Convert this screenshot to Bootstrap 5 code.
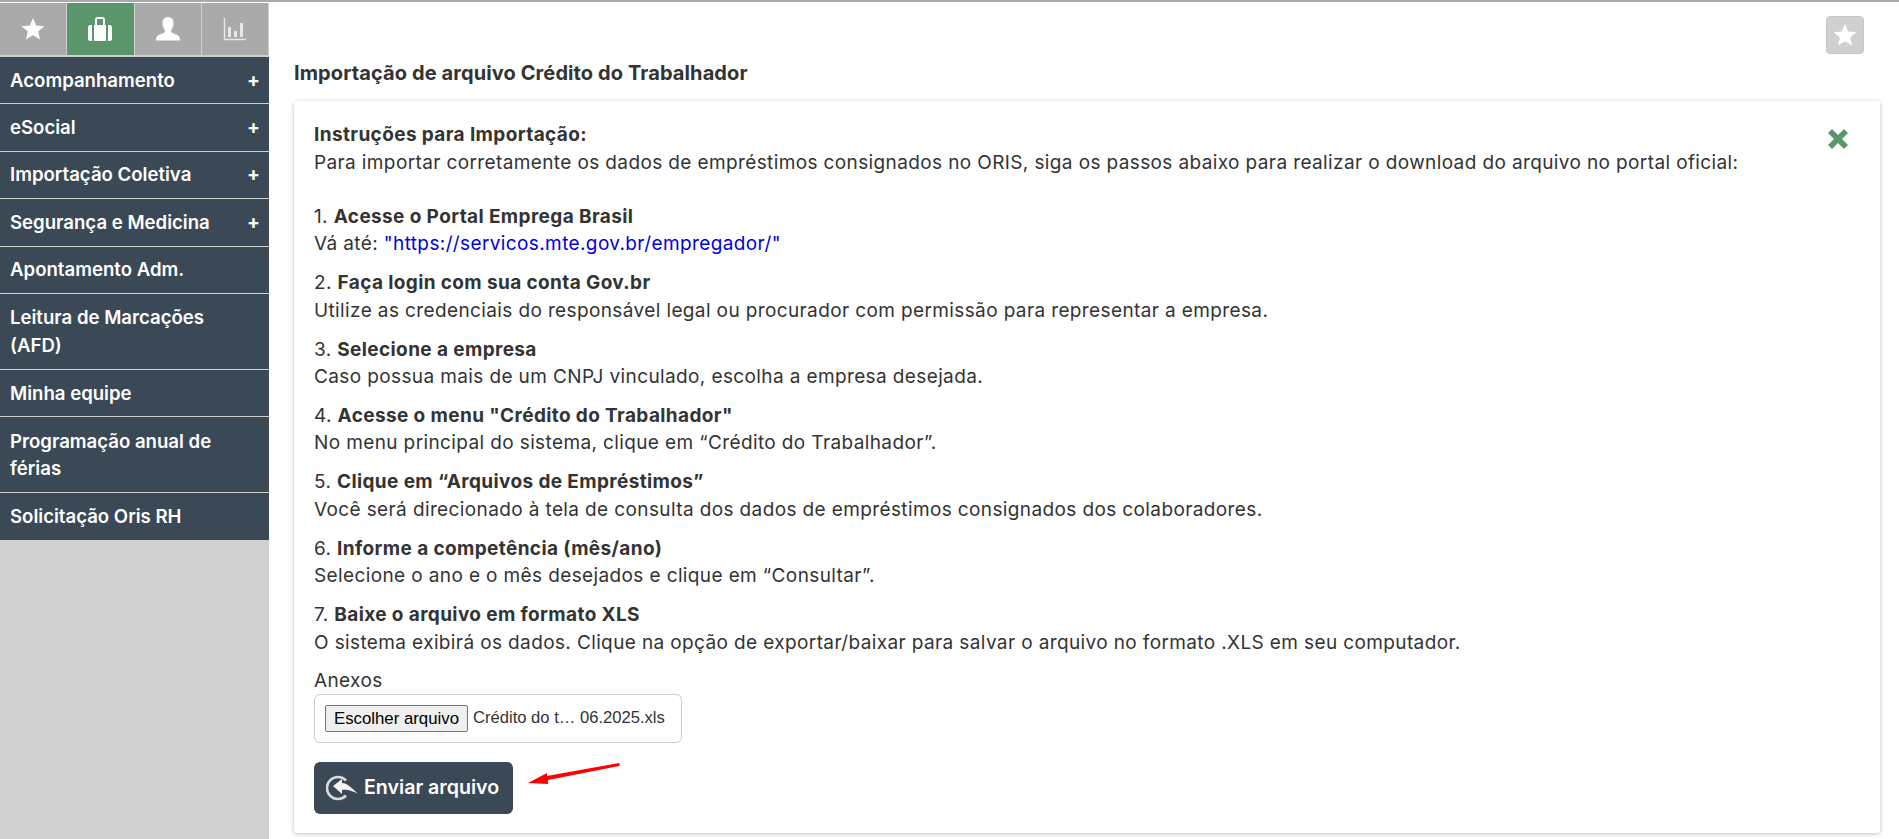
<!DOCTYPE html>
<html lang="pt-BR"><head><meta charset="utf-8"><title>Importação</title>
<link href="https://cdn.jsdelivr.net/npm/bootstrap@5.3.0/dist/css/bootstrap.min.css" rel="stylesheet">
<style>
html,body{height:100%;overflow:hidden}
body{font-family:"Inter","Liberation Sans",sans-serif;color:#333;background:#fff;font-size:19px;letter-spacing:.38px;line-height:27.4px;font-weight:400}
b{font-weight:700}
.app-top{height:3px;background:#fff;border-top:2px solid #aaa}
.app-shell{height:836px}
.side{width:269px;background:#d0d0d0;flex:none}
.tabs{height:54px;gap:1px;padding-right:1px;border-bottom:2px solid #d0d0d0}
.tabbtn{flex:1;background:#aaa;display:flex;align-items:center;justify-content:center}
.tabbtn.on{background:#5a956b}
.menu-i{background:#3b4856;color:#fff;font-weight:600;font-size:18.6px;letter-spacing:0;line-height:27.4px;padding:9.5px 9px 9.5px 10px;border-bottom:1px solid #d0d0d0}
.menu-w{padding:10.2px 30px 10px 10px}
.menu-i span.pl{font-size:19px;font-weight:700}
.mainc{padding:0 19px 0 25px;min-width:0}
.fav{width:38px;height:38px;background:#d0d0d0;border:1px solid #c6c6c6;border-radius:4px;margin:13px 16px 0 0}
.ptitle{font-size:20px;font-weight:700;letter-spacing:.1px;line-height:27px;margin:6.4px 0 14px}
.panel{border-radius:3px;box-shadow:0 1px 4px rgba(0,0,0,.25);padding:20px 19px 19px 20px;height:732px;position:relative}
.lead-in{margin-bottom:26.6px}
.step{margin-bottom:11.6px}
.lnk{color:#0000e0;text-decoration:none}
.anx{line-height:26px}
.upl{width:368px;height:49px;border:1px solid #ccc;border-radius:6px;padding:0 10px;font-family:"Liberation Sans",sans-serif;font-size:16.6px;letter-spacing:0;color:#333}
.fbtn{background:#efefef;border:1px solid #767676;border-radius:2px;padding:1px 8px;font-size:16.8px;line-height:23px;color:#000;margin-right:5px;white-space:nowrap}
.send{background:#3b4856;color:#fff;border:0;border-radius:6px;width:199px;height:52px;padding:0 0 0 12px;gap:5px;font-size:19.6px;letter-spacing:0;font-weight:600;margin-top:19px}
.xmark{position:absolute;right:31px;top:27px}
.arrow{position:absolute;left:232px;top:656px}
</style></head><body>
<div class="app-top"></div>
<div class="d-flex app-shell">
<nav class="side">
<div class="tabs d-flex">
<div class="tabbtn"><svg width="24" height="24" viewBox="0 0 24 24"><path fill="#fff" d="M12 1l3.200 7.600 8.200.6-6.300 5.300 2 8L12 18.200 4.900 22.500l2-8L.6 9.200l8.200-.6z"/></svg></div>
<div class="tabbtn on"><svg width="26" height="26" viewBox="0 0 26 26"><path fill="#fff" d="M3 9h2v16H3c-1 0-2-1-2-2V11c0-1 1-2 2-2zM7 9h12v16H7zM21 9h2c1 0 2 1 2 2v12c0 1-1 2-2 2h-2zM8 9V4c0-2 1-3 3-3h4c2 0 3 1 3 3v5h-2V4c0-.6-.4-1-1-1h-4c-.6 0-1 .4-1 1v5z"/></svg></div>
<div class="tabbtn"><svg width="26" height="26" viewBox="0 0 26 26"><path fill="#fff" d="M13 1c4 0 5.500 3 5.500 6.500 0 3-1.500 5.500-2.500 7 0 2 1 2.500 4 3.500 3 1 5 2 5 6.500H1c0-4.500 2-5.500 5-6.500s4-1.500 4-3.500c-1-1.500-2.500-4-2.500-7C7.500 4 9 1 13 1z"/></svg></div>
<div class="tabbtn"><svg width="24" height="24" viewBox="0 0 24 24"><path fill="none" stroke="#e8e8e8" stroke-width="1.500" d="M1.500 1v21.500H23"/><path fill="#e8e8e8" d="M5 10h3v10H5zM11 14h3v6h-3zM17 6h3v14h-3z"/></svg></div>
</div>
<div class="menu-i d-flex justify-content-between"><span>Acompanhamento</span><span class="pl">+</span></div>
<div class="menu-i d-flex justify-content-between"><span>eSocial</span><span class="pl">+</span></div>
<div class="menu-i d-flex justify-content-between"><span>Importação Coletiva</span><span class="pl">+</span></div>
<div class="menu-i d-flex justify-content-between"><span>Segurança e Medicina</span><span class="pl">+</span></div>
<div class="menu-i">Apontamento Adm.</div>
<div class="menu-i menu-w">Leitura de Marcações (AFD)</div>
<div class="menu-i">Minha equipe</div>
<div class="menu-i menu-w">Programação anual de férias</div>
<div class="menu-i">Solicitação Oris RH</div>
</nav>
<main class="mainc flex-grow-1">
<div class="d-flex justify-content-end"><div class="fav d-flex align-items-center justify-content-center"><svg width="24" height="24" viewBox="0 0 24 24"><path fill="#fff" d="M12 1l3.200 7.600 8.200.6-6.300 5.300 2 8L12 18.200 4.900 22.500l2-8L.6 9.200l8.200-.6z"/></svg></div></div>
<h1 class="ptitle">Importação de arquivo Crédito do Trabalhador</h1>
<section class="panel">
<svg class="xmark" width="22" height="22" viewBox="0 0 22 22"><path fill="#5a956b" d="M5 1l6 6 6-6 4 4-6 6 6 6-4 4-6-6-6 6-4-4 6-6-6-6z"/></svg>
<div class="lead-in"><b>Instruções para Importação:</b><br>Para importar corretamente os dados de empréstimos consignados no ORIS, siga os passos abaixo para realizar o download do arquivo no portal oficial:</div>
<div class="step">1. <b>Acesse o Portal Emprega Brasil</b><br>Vá até: <a class="lnk" href="#">"https://servicos.mte.gov.br/empregador/"</a></div>
<div class="step">2. <b>Faça login com sua conta Gov.br</b><br>Utilize as credenciais do responsável legal ou procurador com permissão para representar a empresa.</div>
<div class="step">3. <b>Selecione a empresa</b><br>Caso possua mais de um CNPJ vinculado, escolha a empresa desejada.</div>
<div class="step">4. <b>Acesse o menu "Crédito do Trabalhador"</b><br>No menu principal do sistema, clique em “Crédito do Trabalhador”.</div>
<div class="step">5. <b>Clique em “Arquivos de Empréstimos”</b><br>Você será direcionado à tela de consulta dos dados de empréstimos consignados dos colaboradores.</div>
<div class="step">6. <b>Informe a competência (mês/ano)</b><br>Selecione o ano e o mês desejados e clique em “Consultar”.</div>
<div class="step">7. <b>Baixe o arquivo em formato XLS</b><br>O sistema exibirá os dados. Clique na opção de exportar/baixar para salvar o arquivo no formato .XLS em seu computador.</div>
<div class="anx">Anexos</div>
<div class="upl d-flex align-items-center"><button type="button" class="fbtn">Escolher arquivo</button><span>Crédito do t… 06.2025.xls</span></div>
<button class="send d-flex align-items-center"><svg width="33" height="28" viewBox="0 0 33 28"><path fill="none" stroke="#dcdcdc" stroke-width="2.600" d="M20 6.500A11 11 0 1 0 20 21.500"/><path fill="#f4f4f4" d="M7 12l9-7v4c5 0 9 4 16 11-5-3-11-5-16-4v4z"/></svg><span>Enviar arquivo</span></button>
<svg class="arrow" width="96" height="30" viewBox="0 0 96 30"><path fill="#f00" d="M2 26L21 16v3L93 6l1 2-1 1L22 23v4z"/></svg>
</section>
</main>
</div>
</body></html>
